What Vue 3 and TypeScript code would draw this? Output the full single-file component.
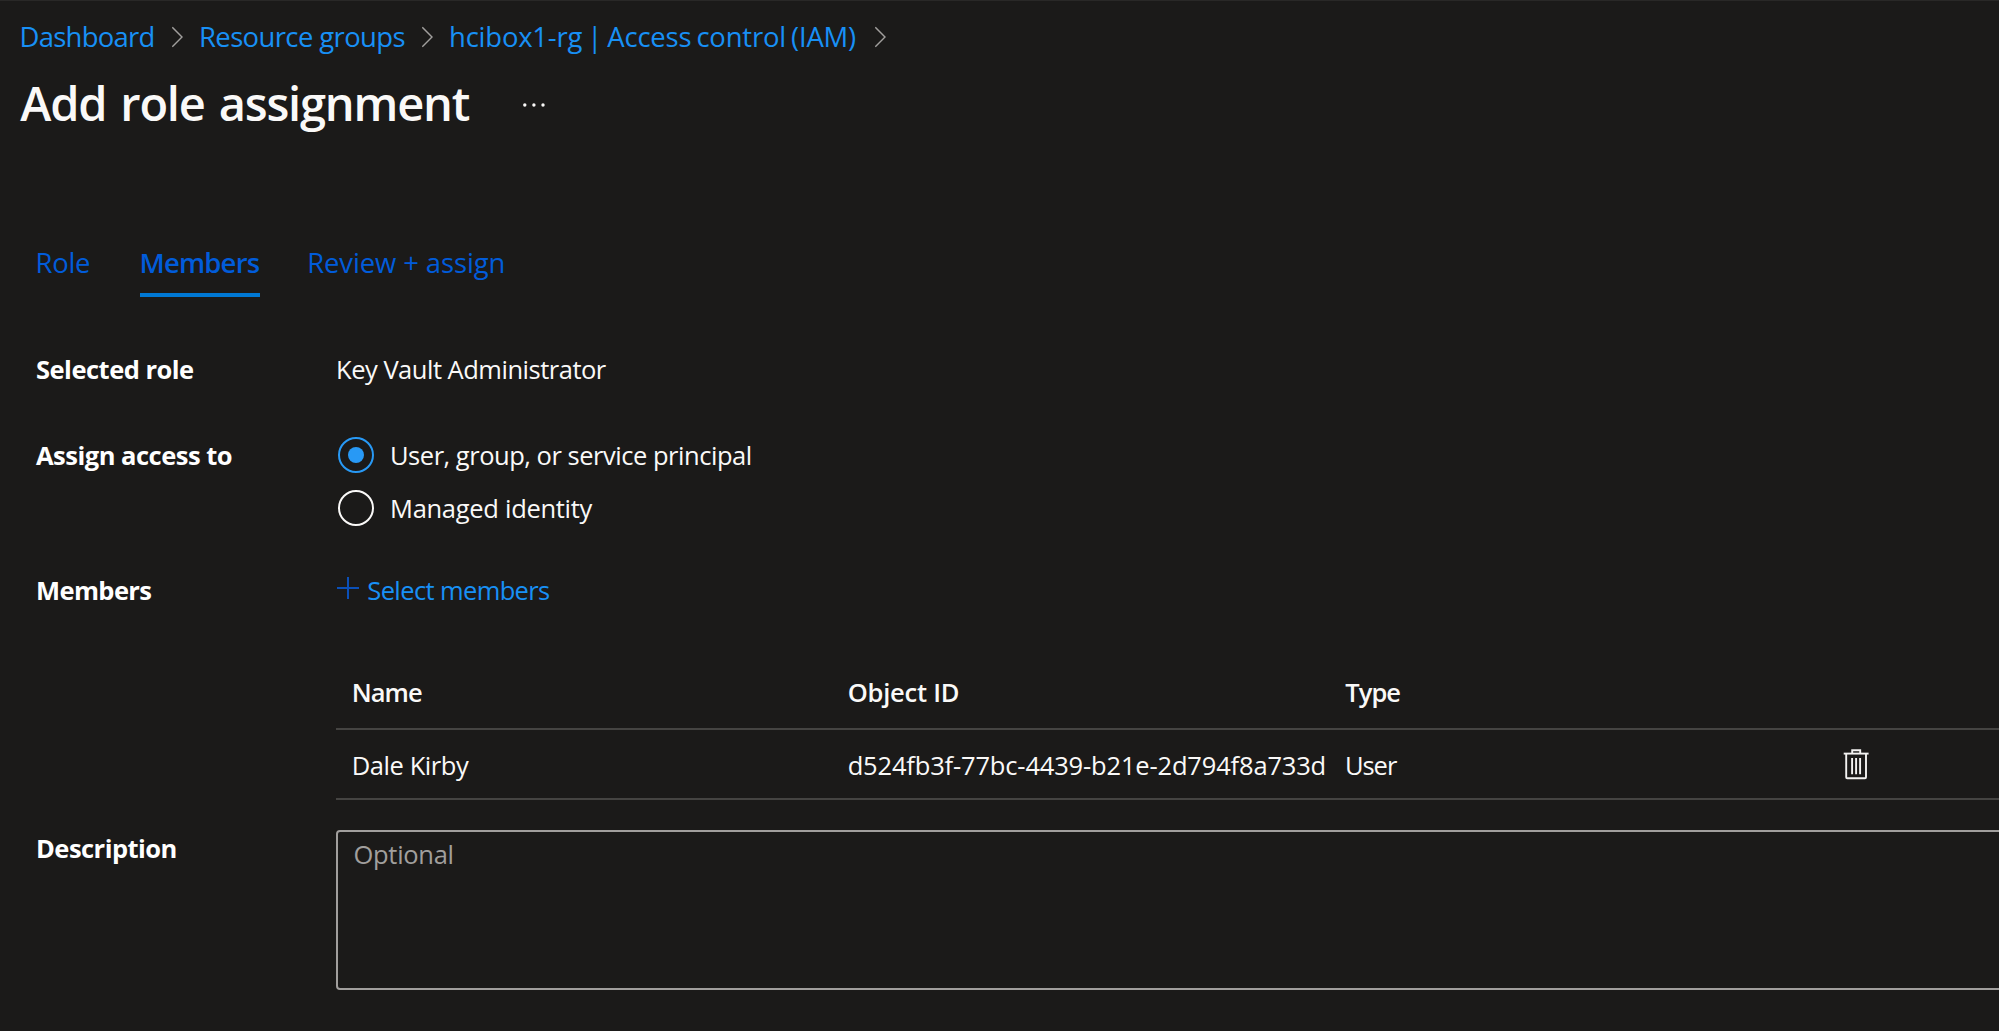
<script setup lang="ts">
import { ref } from 'vue'

interface Member {
  name: string
  objectId: string
  type: string
}

const crumbs = [
  { key: 'dashboard', label: 'Dashboard' },
  { key: 'groups', label: 'Resource groups' },
  { key: 'access', label: 'hcibox1-rg | Access control (IAM)' },
]

const tabs = [
  { key: 'role', label: 'Role' },
  { key: 'members', label: 'Members' },
  { key: 'review', label: 'Review + assign' },
]
const activeTab = ref('members')

const principals = [
  { key: 'principal', label: 'User, group, or service principal' },
  { key: 'managed', label: 'Managed identity' },
]
const assignTo = ref('principal')

const members = ref<Member[]>([
  { name: 'Dale Kirby', objectId: 'd524fb3f-77bc-4439-b21e-2d794f8a733d', type: 'User' },
])

const description = ref('')

function removeMember(index: number) {
  members.value.splice(index, 1)
}
</script>

<template>
  <main class="blade">
    <nav class="crumbs">
      <template v-for="crumb in crumbs" :key="crumb.key">
        <a class="crumb" :class="`crumb-${crumb.key}`">{{ crumb.label }}</a>
        <svg class="chevron" width="12" height="22" viewBox="0 0 12 22">
          <path d="M0.3 1.2 L10 11 L0.3 20.8" fill="none" stroke="#a19f9d" stroke-width="1.4" />
        </svg>
      </template>
    </nav>

    <header class="heading">
      <h1>Add role assignment</h1>
      <svg class="more" width="24" height="6" viewBox="0 0 24 6">
        <circle cx="2.8" cy="3" r="1.7" />
        <circle cx="11.9" cy="3" r="1.7" />
        <circle cx="21" cy="3" r="1.7" />
      </svg>
    </header>

    <div class="tabs" role="tablist">
      <a
        v-for="tab in tabs"
        :key="tab.key"
        class="tab"
        :class="[`tab-${tab.key}`, { active: tab.key === activeTab }]"
        role="tab"
        @click="activeTab = tab.key"
      ><span>{{ tab.label }}</span></a>
    </div>

    <section class="form">
      <div class="row row-role">
        <div class="label label-role">Selected role</div>
        <div class="value">Key Vault Administrator</div>
      </div>

      <div class="row row-access">
        <div class="label label-access">Assign access to</div>
        <div class="radios">
          <div
            v-for="item in principals"
            :key="item.key"
            class="radio"
            :class="[`radio-${item.key}`, { checked: item.key === assignTo }]"
            @click="assignTo = item.key"
          >
            <span class="dot"></span>
            <span class="radio-text">{{ item.label }}</span>
          </div>
        </div>
      </div>

      <div class="row row-members">
        <div class="label label-members">Members</div>
        <div class="members">
          <a class="select">
            <svg class="plus" width="24" height="24" viewBox="0 0 24 24">
              <path d="M12 1v22M1 12h22" fill="none" stroke="#0b50b8" stroke-width="2" />
            </svg>
            <span>Select members</span>
          </a>

          <div class="table">
            <div class="cells head">
              <div class="h-name">Name</div>
              <div class="h-id">Object ID</div>
              <div class="h-type">Type</div>
            </div>
            <div v-for="(member, i) in members" :key="member.objectId" class="cells body">
              <div class="c-name">{{ member.name }}</div>
              <div class="c-id">{{ member.objectId }}</div>
              <div class="c-type">{{ member.type }}</div>
              <svg class="trash" width="28" height="32" viewBox="0 0 28 32" @click="removeMember(i)">
                <path d="M0.7 5.6H25.6" />
                <path d="M9.2 5V2.2H17.2V5" />
                <path d="M3.2 6V29.2Q3.2 30.2 4.2 30.2H22Q23 30.2 23 29.2V6" />
                <path d="M9.1 10V26.2M13.1 10V26.2M17.1 10V26.2" />
              </svg>
            </div>
          </div>
        </div>
      </div>

      <div class="row row-description">
        <div class="label label-description">Description</div>
        <textarea v-model="description" class="description" placeholder="Optional"></textarea>
      </div>
    </section>
  </main>
</template>

<style>
body {
  background: #ffffff;
  overflow: hidden;
}
</style>

<style scoped>
.blade {
  box-sizing: border-box;
  width: 1999px;
  height: 1031px;
  overflow: hidden;
  border-top: 1px solid #292827;
  background: #1b1a19;
  color: #faf9f8;
  font-family: 'Open Sans', 'Noto Sans', sans-serif;
  font-size: 25.5px;
  line-height: 36px;
  white-space: nowrap;
}

.crumbs {
  display: grid;
  grid-template-columns: 152.5px 27px 223px 27px 426px 27px;
  align-items: center;
  height: 38px;
  padding: 16px 0 0 19.5px;
  font-size: 27.45px;
  line-height: 38px;
}
.crumb {
  padding-top: 1px;
  color: #1890f5;
}
.crumb-dashboard { letter-spacing: -0.726px; }
.crumb-groups { letter-spacing: -0.598px; }
.crumb-access {
  letter-spacing: -0.2px;
  word-spacing: -1.8px;
}
.chevron { display: block; }

.heading {
  display: grid;
  grid-template-columns: 501.7px auto;
  align-items: center;
  justify-content: start;
  margin-top: 16px;
  padding-left: 20.3px;
}
h1 {
  margin: 0;
  font-size: 47px;
  font-weight: 600;
  line-height: 64px;
  letter-spacing: -1.2px;
  word-spacing: 3px;
}
.more {
  display: block;
  margin-top: 4px;
  fill: #faf9f8;
}

.tabs {
  display: grid;
  grid-template-columns: 104.4px 120px auto;
  justify-content: start;
  margin-top: 108px;
  padding-left: 35.6px;
  font-size: 27.45px;
  line-height: 38px;
}
.tab {
  box-sizing: border-box;
  height: 54px;
  padding-top: 1px;
  border-bottom: 4px solid transparent;
  color: #015cda;
}
.tab.active {
  border-color: #0078d4;
  font-weight: 600;
}
.tab-role { letter-spacing: -0.322px; }
.tab-members { letter-spacing: -0.783px; }
.tab-members span { margin-left: -0.6px; }
.tab-review {
  margin-left: 47.2px;
  letter-spacing: -0.1px;
}

.form { padding: 54px 0 0 36px; }
.row {
  display: grid;
  grid-template-columns: 300px 1fr;
}
.label {
  color: #ffffff;
  font-weight: 700;
}
.label-role { letter-spacing: -0.5px; }
.label-access { letter-spacing: -0.5px; }
.label-members { letter-spacing: -0.6px; }
.label-description { letter-spacing: -0.53px; }

.value { letter-spacing: -0.488px; }

.row-access { margin-top: 50px; }
.radios {
  display: flex;
  flex-direction: column;
  gap: 17px;
  padding-left: 2px;
}
.radio {
  display: flex;
  align-items: center;
  gap: 16px;
  height: 36px;
}
.dot {
  display: flex;
  align-items: center;
  justify-content: center;
  box-sizing: border-box;
  width: 36px;
  height: 36px;
  border: 2px solid #faf9f8;
  border-radius: 50%;
}
.checked .dot { border-color: #2899f5; }
.checked .dot::after {
  content: '';
  width: 16px;
  height: 16px;
  border-radius: 50%;
  background: #2899f5;
}
.radio-principal { letter-spacing: -0.475px; }
.radio-managed { letter-spacing: -0.29px; }

.row-members { margin-top: 46px; }
.select {
  display: flex;
  gap: 7.3px;
  height: 36px;
  color: #1890f5;
  letter-spacing: -0.619px;
}
.plus {
  display: block;
  margin-top: 4px;
}

.table { margin-top: 66px; }
.cells {
  display: grid;
  grid-template-columns: 496px 497px 498px auto;
  justify-content: start;
  box-sizing: border-box;
  padding-left: 15.7px;
  border-bottom: 2px solid #454442;
}
.head {
  height: 56px;
  font-weight: 600;
}
.body {
  height: 70px;
  padding-top: 17px;
}
.h-name { letter-spacing: -0.919px; }
.h-id { letter-spacing: -0.218px; }
.h-type {
  margin-left: 0.6px;
  letter-spacing: -0.967px;
}
.c-name { letter-spacing: -0.418px; }
.c-id { letter-spacing: -0.17px; }
.c-type {
  margin-left: 0.2px;
  letter-spacing: -1.011px;
}
.trash {
  display: block;
  margin-top: 1px;
  fill: none;
  stroke: #f3f2f1;
  stroke-width: 1.9;
}

.row-description { margin-top: 30px; }
.description {
  display: block;
  box-sizing: border-box;
  width: 1720px;
  height: 160px;
  margin: 0;
  padding: 4px 15.5px;
  border: 2px solid #a19f9d;
  border-radius: 4px;
  outline: 0;
  background: #1b1a19;
  color: #faf9f8;
  font: inherit;
  letter-spacing: -0.293px;
  resize: none;
}
.description::placeholder {
  color: #a19f9d;
  opacity: 1;
}
</style>
